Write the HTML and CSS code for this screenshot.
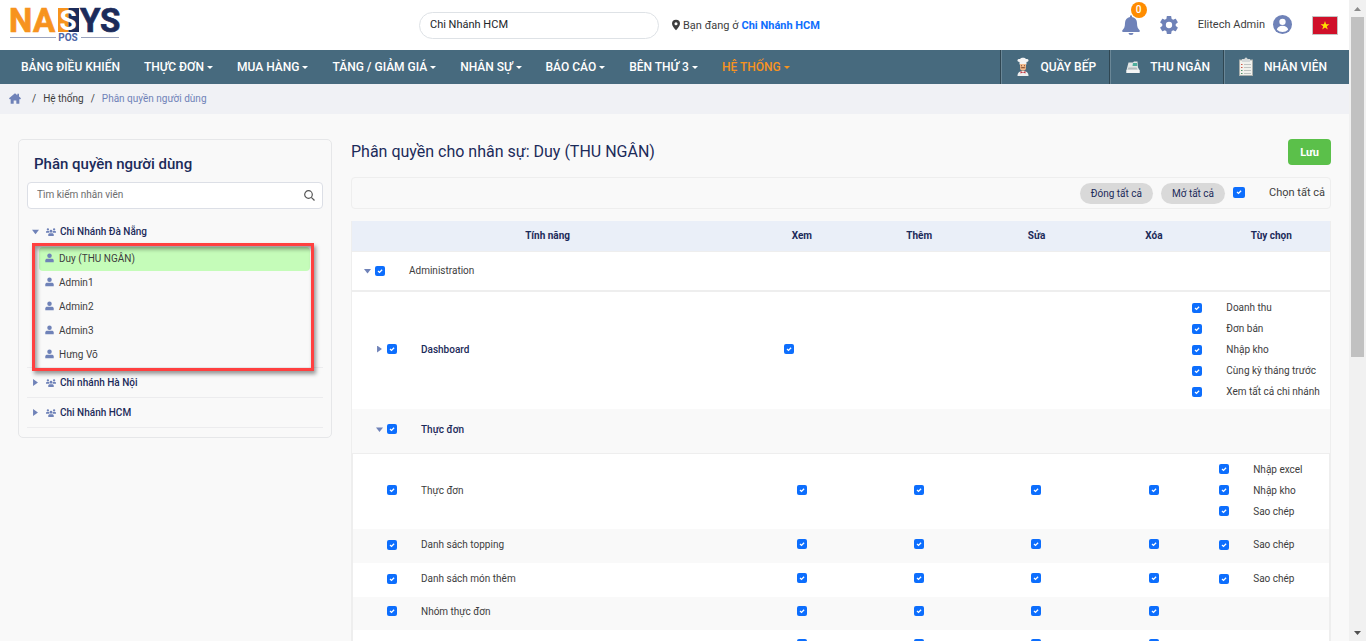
FILE: index.html
```html
<!DOCTYPE html>
<html lang="vi">
<head>
<meta charset="utf-8">
<meta name="viewport" content="width=device-width, initial-scale=1">
<title>Phân quyền người dùng</title>
<link rel="stylesheet" href="styles.css">
</head>
<body>
<svg class="sprite" aria-hidden="true">
  <symbol id="i-user" viewBox="0 0 16 16"><circle cx="8" cy="4" r="4"/><path d="M0.5 15.5v-3C.5 10.3 2 9.300 4 9.300h8c2 0 3.500 1 3.500 3.200v3z"/></symbol>
  <symbol id="i-users" viewBox="0 0 20 16"><circle cx="10" cy="6.500" r="2.800"/><circle cx="3.800" cy="2.800" r="2.300"/><circle cx="16.200" cy="2.800" r="2.300"/><path d="M4.500 16v-2.500c0-2 1.500-3 3.500-3h4c2 0 3.500 1 3.500 3V16zM0 9.500V8c0-1.300 1-2 2-2h3.500c.3 0 .6 0 .8.200C6 7.500 6.300 8.700 7 9.500zM20 9.500V8c0-1.300-1-2-2-2h-3.500c-.3 0-.6 0-.8.200.3 1.300 0 2.500-.7 3.300z"/></symbol>
</svg>

<div class="page">
  <header class="topbar">
    <a class="brand" href="#" aria-label="NASYS POS">
      <svg width="116" height="50" viewBox="-2 0 116 50">
        <path fill="#f7931e" d="M48 8h10.500v24H48z"/><path fill="#1c2b5a" d="M58.500 8H69v24H58.500z"/>
        <g font-family="Roboto, sans-serif" font-weight="700" font-size="33" stroke-width=".7">
          <text x="-1" y="32" fill="#f7931e" stroke="#f7931e">N</text>
          <text x="23" y="32" fill="#f7931e" stroke="#f7931e">A</text>
          <text x="58" y="30" text-anchor="middle" font-size="28" fill="#ffffff">S</text>
          <text x="70" y="32" fill="#1c2b5a" stroke="#1c2b5a">Y</text>
          <text x="90" y="32" fill="#1c2b5a" stroke="#1c2b5a">S</text>
        </g>
        <path stroke="#9aa3bd" d="M0 37.500h46M71 37.500h38"/>
        <text x="58" y="41" text-anchor="middle" font-family="Roboto, sans-serif" font-weight="700" font-size="10" fill="#4c66a8">POS</text>
      </svg>
    </a>
    <input class="branch" type="text" value="Chi Nhánh HCM" aria-label="Chi nhánh">
    <p class="location">
      <svg width="8" height="12" viewBox="0 0 12 16"><path fill="#3d3d3d" fill-rule="evenodd" d="M6 0a6 6 0 0 1 6 6c0 3.500-4 7.500-6 10C4 13.500 0 9.500 0 6a6 6 0 0 1 6-6zm0 3.700a2.300 2.300 0 1 0 0 4.600 2.300 2.300 0 0 0 0-4.600z"/></svg>
      Bạn đang ở <a href="#">Chi Nhánh HCM</a>
    </p>
    <div class="tools">
      <button class="icon-btn bell" type="button" aria-label="Thông báo">
        <svg width="18" height="20" viewBox="0 0 18 20"><path fill="#6f82b8" d="M8 1.200a1 1 0 0 1 2 0v.7c3 .5 5 2.800 5 6 0 4 .9 5.400 2.400 7 .9 1 .3 2.100-.9 2.100h-15c-1.200 0-1.800-1.100-.9-2.100C2.100 13.300 3 11.900 3 7.900c0-3.200 2-5.500 5-6zM6.500 18h5a2.500 2 0 0 1-5 0z"/></svg>
        <span class="badge">0</span>
      </button>
      <button class="icon-btn" type="button" aria-label="Cài đặt">
        <svg width="18" height="20" viewBox="2 1.500 20 21"><path fill="#6f82b8" d="M19.430 12.980c.04-.32.070-.64.070-.98s-.03-.66-.07-.98l2.110-1.650c.19-.15.240-.42.120-.64l-2-3.460c-.12-.22-.39-.3-.61-.22l-2.490 1c-.52-.4-1.080-.73-1.690-.98l-.38-2.650C14.460 2.180 14.250 2 14 2h-4c-.25 0-.46.180-.49.420l-.38 2.650c-.61.250-1.170.590-1.690.98l-2.490-1c-.23-.09-.49 0-.61.220l-2 3.460c-.13.220-.07.490.12.640l2.110 1.650c-.04.320-.07.650-.07.980s.03.660.070.980l-2.110 1.650c-.19.150-.24.420-.12.640l2 3.460c.12.220.39.300.61.220l2.490-1c.52.400 1.080.730 1.690.980l.38 2.650c.03.240.24.420.49.420h4c.25 0 .46-.18.490-.42l.38-2.650c.61-.25 1.170-.59 1.690-.98l2.490 1c.23.090.49 0 .61-.22l2-3.460c.12-.22.070-.49-.12-.64zM12 15.500a3.500 3.500 0 1 1 0-7 3.500 3.500 0 0 1 0 7z"/></svg>
      </button>
      <a class="account" href="#">Elitech Admin
        <svg width="19" height="19" viewBox="0 0 18 18"><circle cx="9" cy="9" r="9" fill="#6f82b8"/><circle cx="9" cy="6.500" r="3" fill="#fff"/><path fill="#fff" d="M3.700 14a5.300 3.800 0 0 1 10.600 0A7.500 7.500 0 0 1 3.700 14z"/></svg>
      </a>
      <button class="icon-btn" type="button" aria-label="Tiếng Việt">
        <svg width="26" height="19" viewBox="0 0 26 19"><path fill="#d0102a" stroke="#c4c4c4" d="M.5.500h25v18H.5z"/><path fill="#ffdf00" d="M13 5l1.100 3.200h3.400l-2.700 2 1 3.300-2.800-2-2.800 2 1-3.300-2.700-2h3.400z"/></svg>
      </button>
    </div>
  </header>

  <nav class="mainnav" aria-label="Chính">
    <ul class="menu">
      <li><a href="#">BẢNG ĐIỀU KHIỂN</a></li>
      <li><a class="drop" href="#">THỰC ĐƠN</a></li>
      <li><a class="drop" href="#">MUA HÀNG</a></li>
      <li><a class="drop" href="#">TĂNG / GIẢM GIÁ</a></li>
      <li><a class="drop" href="#">NHÂN SỰ</a></li>
      <li><a class="drop" href="#">BÁO CÁO</a></li>
      <li><a class="drop" href="#">BÊN THỨ 3</a></li>
      <li><a class="drop active" href="#">HỆ THỐNG</a></li>
    </ul>
    <ul class="shortcuts">
      <li><a href="#">
        <svg width="20" height="20" viewBox="0 0 20 20"><path fill="#f4f4f4" d="M6.500 5C3.500 4.500 4 1.500 7 2 8 .2 12 .2 13 2c3-.5 3.500 2.500.5 3v2.500h-7z"/><path fill="#f0b98c" d="M7 7h6v4c0 3.500-6 3.500-6 0z"/><path fill="#8a5230" d="M7.500 10.500c1.500-.8 3.500-.8 5 0l-.5.800H8z"/><path fill="#7a4a30" d="M8 8.300h1v1H8zM11 8.300h1v1h-1z"/><path fill="#eee" d="M4.500 19c0-3.500 2-5 5.500-5s5.500 1.500 5.500 5z"/><path fill="#c23b45" d="M7.500 14l2.500 1.200 2.500-1.200v2.500L10 15.500l-2.500 1z"/></svg>
        QUẦY BẾP</a></li>
      <li><a href="#">
        <svg width="20" height="20" viewBox="0 0 20 20"><path fill="#e3e7e6" d="M6.500 5.500H11l1-1h3.500l.5 6 1.500 2.500v3h-13v-3z"/><path fill="#4fae9c" d="M11 6h4l.4 3H10.500z"/><path fill="#b4bbbd" d="M6.500 10.500h8l1 2H5.500z"/><path fill="#f4f5f5" d="M4.500 13h13v3h-13z"/></svg>
        THU NGÂN</a></li>
      <li><a href="#">
        <svg width="20" height="20" viewBox="0 0 20 20"><path fill="#a9aeac" d="M3 2.500h14V19H3z"/><path fill="#f1f1ec" d="M4 3.500h12V18H4z"/><path fill="#d4d8d8" d="M6 2h2.500a1.500 1.500 0 0 1 3 0H14v3H6z"/><path stroke="#bfc3c1" d="M8 7.500h7M8 10.500h7M8 13.500h7M8 16.500h7"/><path stroke="#d05545" d="M5 7.500h1.500M5 10.500h1.500"/><path stroke="#509268" d="M5 13.500h1.500M5 16.500h1.500"/></svg>
        NHÂN VIÊN</a></li>
    </ul>
  </nav>

  <nav class="crumbs" aria-label="Breadcrumb">
    <a href="#" aria-label="Trang chủ"><svg width="12" height="11" viewBox="0 0 18 16"><path fill="#6f82b8" d="M9 0l3.500 3V1h2.500v4l3 2.800L17 9h-1.500v7H11v-5H7v5H2.500V9H1L0 7.800z"/></svg></a>
    <span>/</span><a href="#">Hệ thống</a><span>/</span><span class="here">Phân quyền người dùng</span>
  </nav>

  <main class="content">
    <aside class="staff">
      <h2>Phân quyền người dùng</h2>
      <div class="search">
        <input type="text" placeholder="Tìm kiếm nhân viên" aria-label="Tìm kiếm nhân viên">
        <svg width="11" height="11" viewBox="0 0 11 11" fill="none" stroke="#555" stroke-width="1.200"><circle cx="4.500" cy="4.500" r="3.800"/><path d="M7.300 7.300L10.500 10.500"/></svg>
      </div>
      <ul class="tree">
        <li class="group open">
          <button type="button" aria-expanded="true"><i class="arrow down"></i><svg class="users"><use href="#i-users"/></svg>Chi Nhánh Đà Nẵng</button>
          <ul class="people">
            <li><a class="selected" href="#"><svg class="user"><use href="#i-user"/></svg>Duy (THU NGÂN)</a></li>
            <li><a href="#"><svg class="user"><use href="#i-user"/></svg>Admin1</a></li>
            <li><a href="#"><svg class="user"><use href="#i-user"/></svg>Admin2</a></li>
            <li><a href="#"><svg class="user"><use href="#i-user"/></svg>Admin3</a></li>
            <li><a href="#"><svg class="user"><use href="#i-user"/></svg>Hưng Võ</a></li>
          </ul>
        </li>
        <li class="group"><button type="button" aria-expanded="false"><i class="arrow"></i><svg class="users"><use href="#i-users"/></svg>Chi nhánh Hà Nội</button></li>
        <li class="group"><button type="button" aria-expanded="false"><i class="arrow"></i><svg class="users"><use href="#i-users"/></svg>Chi Nhánh HCM</button></li>
      </ul>
    </aside>

    <section class="rights">
      <div class="heading">
        <h1>Phân quyền cho nhân sự: Duy (THU NGÂN)</h1>
        <button class="save" type="button">Lưu</button>
      </div>
      <div class="actions">
        <button class="pill" type="button">Đóng tất cả</button>
        <button class="pill" type="button">Mở tất cả</button>
        <label class="all"><input type="checkbox" checked>Chọn tất cả</label>
      </div>

      <div class="matrix">
        <table class="grid">
          <thead><tr><th class="name">Tính năng</th><th>Xem</th><th>Thêm</th><th>Sửa</th><th>Xóa</th><th>Tùy chọn</th></tr></thead>
          <tbody><tr class="module"><td colspan="6"><label><i class="arrow down"></i><input type="checkbox" checked>Administration</label></td></tr></tbody>
        </table>

        <table class="grid sub">
          <colgroup><col class="c-name"><col class="c-act"><col class="c-act"><col class="c-act"><col class="c-act"><col></colgroup>
          <tbody>
            <tr>
              <td><label class="strong"><i class="arrow"></i><input type="checkbox" checked>Dashboard</label></td>
              <td class="act"><input type="checkbox" checked aria-label="Xem"></td><td></td><td></td><td></td>
              <td class="opts">
                <label><input type="checkbox" checked>Doanh thu</label>
                <label><input type="checkbox" checked>Đơn bán</label>
                <label><input type="checkbox" checked>Nhập kho</label>
                <label><input type="checkbox" checked>Cùng kỳ tháng trước</label>
                <label><input type="checkbox" checked>Xem tất cả chi nhánh</label>
              </td>
            </tr>
            <tr class="section"><td colspan="6"><label class="strong"><i class="arrow down"></i><input type="checkbox" checked>Thực đơn</label></td></tr>
          </tbody>
        </table>

        <table class="grid leaf">
          <colgroup><col class="c-wide"><col class="c-even"><col class="c-even"><col class="c-even"><col class="c-even"><col></colgroup>
          <tbody>
            <tr>
              <td><label><input type="checkbox" checked>Thực đơn</label></td>
              <td class="act"><input type="checkbox" checked aria-label="Xem"></td>
              <td class="act"><input type="checkbox" checked aria-label="Thêm"></td>
              <td class="act"><input type="checkbox" checked aria-label="Sửa"></td>
              <td class="act"><input type="checkbox" checked aria-label="Xóa"></td>
              <td class="opts">
                <label><input type="checkbox" checked>Nhập excel</label>
                <label><input type="checkbox" checked>Nhập kho</label>
                <label><input type="checkbox" checked>Sao chép</label>
              </td>
            </tr>
            <tr>
              <td><label><input type="checkbox" checked>Danh sách topping</label></td>
              <td class="act"><input type="checkbox" checked aria-label="Xem"></td>
              <td class="act"><input type="checkbox" checked aria-label="Thêm"></td>
              <td class="act"><input type="checkbox" checked aria-label="Sửa"></td>
              <td class="act"><input type="checkbox" checked aria-label="Xóa"></td>
              <td class="opts"><label><input type="checkbox" checked>Sao chép</label></td>
            </tr>
            <tr>
              <td><label><input type="checkbox" checked>Danh sách món thêm</label></td>
              <td class="act"><input type="checkbox" checked aria-label="Xem"></td>
              <td class="act"><input type="checkbox" checked aria-label="Thêm"></td>
              <td class="act"><input type="checkbox" checked aria-label="Sửa"></td>
              <td class="act"><input type="checkbox" checked aria-label="Xóa"></td>
              <td class="opts"><label><input type="checkbox" checked>Sao chép</label></td>
            </tr>
            <tr class="short">
              <td><label><input type="checkbox" checked>Nhóm thực đơn</label></td>
              <td class="act"><input type="checkbox" checked aria-label="Xem"></td>
              <td class="act"><input type="checkbox" checked aria-label="Thêm"></td>
              <td class="act"><input type="checkbox" checked aria-label="Sửa"></td>
              <td class="act"><input type="checkbox" checked aria-label="Xóa"></td>
              <td></td>
            </tr>
            <tr class="short">
              <td></td>
              <td class="act"><input type="checkbox" checked aria-label="Xem"></td>
              <td class="act"><input type="checkbox" checked aria-label="Thêm"></td>
              <td class="act"><input type="checkbox" checked aria-label="Sửa"></td>
              <td class="act"><input type="checkbox" checked aria-label="Xóa"></td>
              <td></td>
            </tr>
          </tbody>
        </table>
      </div>
    </section>
  </main>
</div>

<div class="scrollbar" aria-hidden="true"><i class="up"></i><i class="thumb"></i><i class="dn"></i></div>
</body>
</html>
```
FILE: styles.css
```css
* { box-sizing: border-box; }

body {
  margin: 0;
  display: flex;
  height: 100vh;
  overflow: hidden;
  background: #f9f9f9;
  color: #3d3d3d;
  font-family: Roboto, "Noto Sans", sans-serif;
  font-size: 10px;
  line-height: 15px;
}
ul { list-style: none; margin: 0; padding: 0; }
h1, h2, p { margin: 0; font-weight: 400; }
a { color: inherit; text-decoration: none; }
button, input { font: inherit; color: inherit; }
button { border: 0; background: none; padding: 0; }
svg { display: block; flex: none; }
.sprite { position: absolute; width: 0; height: 0; }
.page { flex: 1; min-width: 0; overflow: hidden; }

/* Top bar */
.topbar {
  display: flex;
  align-items: center;
  height: 50px;
  padding: 0 11px 0 8px;
  background: #fff;
}
.brand { flex: 0 0 411px; }
.branch {
  width: 240px;
  height: 27px;
  padding: 0 10px 1px;
  border: 1px solid #dee2e6;
  border-radius: 14px;
  background: #fff;
  color: #212529;
  font-size: 11px;
}
.location { display: flex; align-items: center; gap: 3px; margin-left: 13px; font-size: 11px; }
.location a { color: #0d6efd; font-weight: 700; }
.tools { display: flex; align-items: center; gap: 20px; margin-left: auto; }
.icon-btn { position: relative; }
.badge {
  position: absolute;
  top: -13px;
  left: 9px;
  width: 16px;
  height: 16px;
  border-radius: 8px;
  background: #ff8c00;
  color: #fff;
  font-weight: 500;
  line-height: 16px;
}
.account { display: flex; align-items: center; gap: 8px; padding-bottom: 2px; font-size: 11px; }

/* Main navigation */
.mainnav {
  display: flex;
  justify-content: space-between;
  height: 34px;
  background: #476a7e;
  color: #fff;
  font-size: 12px;
  font-weight: 500;
  line-height: 34px;
}
.menu, .shortcuts { display: flex; }
.menu { gap: 24px; padding-left: 21px; }
.menu a { display: flex; align-items: center; gap: 3px; white-space: nowrap; }
.drop::after {
  content: "";
  border: 3px solid transparent;
  border-top-color: currentColor;
  border-bottom: 0;
}
.active { color: #f7931e; }
.shortcuts li { border-left: 1px solid #2f4652; }
.shortcuts a {
  display: flex;
  align-items: center;
  gap: 8px;
  padding: 0 13px 0 11px;
  border-left: 1px solid #6a8797;
  white-space: nowrap;
}
.shortcuts li:last-child a { padding-right: 22px; }

.crumbs {
  display: flex;
  align-items: center;
  gap: 7px;
  height: 30px;
  padding: 0 0 2px 9px;
  background: #f0f1f5;
}
.crumbs > a:first-child { margin-right: 4px; }
.here { color: #6f82b8; }

.content { display: flex; align-items: flex-start; gap: 19px; padding: 25px 18px 0; }

/* Staff tree */
.staff {
  flex: 0 0 314px;
  padding: 8px 8px 9px;
  border: 1px solid #e6e7e9;
  border-radius: 5px;
}
.staff h2 { padding: 6px 7px 8px; color: #1c2b5a; font-size: 15px; font-weight: 500; line-height: 20px; }
.search { position: relative; }
.search input {
  display: block;
  width: 100%;
  height: 27px;
  padding: 0 30px 2px 9px;
  border: 1px solid #dcdfe6;
  border-radius: 4px;
  background: #fff;
}
.search input::placeholder { color: #6c6c6c; opacity: 1; }
.search svg { position: absolute; top: 8px; right: 8px; }
.tree { padding-top: 8px; }
.group { border-bottom: 1px solid #ececee; }
.group button {
  display: flex;
  align-items: center;
  width: 100%;
  height: 29px;
  padding-left: 5px;
  color: #1c2b5a;
  font-weight: 500;
}
.arrow {
  display: inline-block;
  flex: none;
  width: 7px;
  height: 7px;
  background: #6f82b8;
  clip-path: polygon(15% 0, 85% 50%, 15% 100%);
}
.arrow.down { clip-path: polygon(0 25%, 100% 25%, 50% 90%); }
.users { width: 10px; height: 8px; margin: 0 4px 0 7px; fill: #6f82b8; }
.people { position: relative; padding: 1px 13px 0 12px; }
.people::after {
  content: "";
  position: absolute;
  inset: -3px 9px -4px 5px;
  border: 3px solid #ff4040;
  box-shadow: 2px 3px 4px rgba(0, 0, 0, .4), inset 2px 3px 4px rgba(0, 0, 0, .4);
  pointer-events: none;
}
.people a { display: flex; align-items: center; gap: 5px; height: 24px; padding: 0 0 2px 6px; border-radius: 4px; }
.people .selected { background: #c5fcb9; }
.user { width: 9px; height: 10px; fill: #6f82b8; }

/* Permissions */
.rights { flex: 1; min-width: 0; }
.heading { display: flex; align-items: center; justify-content: space-between; height: 26px; }
.heading h1 { color: #1c2b5a; font-size: 16px; line-height: 26px; }
.save { width: 43px; height: 26px; border-radius: 4px; background: #5bc04a; color: #fff; font-size: 11px; font-weight: 700; }
.actions {
  display: flex;
  align-items: center;
  justify-content: flex-end;
  gap: 8px;
  height: 32px;
  margin: 12px 0;
  padding-right: 5px;
  border: 1px solid #eee;
  border-radius: 4px;
}
.pill { height: 21px; padding: 0 11px; border-radius: 11px; background: #d9d9d9; color: #1c2b5a; }
.all { display: flex; align-items: center; gap: 24px; padding-bottom: 2px; font-size: 11px; }

input[type="checkbox"] {
  appearance: none;
  flex: none;
  display: block;
  width: 10px;
  height: 10px;
  margin: 0;
  border-radius: 2px;
  background: #0d6efd url("data:image/svg+xml,%3Csvg xmlns='http://www.w3.org/2000/svg' viewBox='0 0 10 10'%3E%3Cpath fill='none' stroke='white' stroke-width='1.300' d='M3 5l1.500 1.400 2.600-2.700'/%3E%3C/svg%3E") center / 10px no-repeat;
}
.all input[type="checkbox"] { width: 12px; height: 11px; }

.matrix { border: solid #eee; border-width: 0 1px; background: #fff; }
.grid { width: 100%; table-layout: fixed; border-collapse: collapse; }
.grid th, .grid td { padding: 0; }
.grid th { height: 30px; border-bottom: 1px solid #eee; background: #eaeff8; color: #1c2b5a; font-weight: 700; }
.grid th.name { width: 40%; }
.grid label { display: flex; align-items: center; }
.grid label input { margin-right: 24px; }
.grid .arrow { margin-right: 4px; }
.module td { height: 40px; padding-left: 12px; border-bottom: 2px solid #eee; }
.module label { height: 36px; }
.strong { padding-left: 24px; color: #1c2b5a; font-weight: 500; }
.c-name { width: 39%; }
.c-act { width: 11.4%; }
.c-wide { width: 40%; }
.c-even { width: 12%; }
.grid .act { padding-bottom: 3px; }
.sub label.strong { padding-bottom: 3px; }
.act input { margin: 0 auto; }
.grid .opts { padding: 5px 0 7px 13px; }
.opts label { height: 21px; white-space: nowrap; }
.section td { height: 44px; border-bottom: 1px solid #eee; background: #f9f9f9; }
.leaf { border: solid #eee; border-width: 0 1px; }
.grid.leaf .opts { padding-left: 7px; }
.leaf td { height: 34px; }
.leaf td:first-child { padding: 0 0 2px 34px; }
.leaf tr:nth-child(even) { background: #f9f9f9; }
.leaf .short td { height: 33px; padding-bottom: 4px; }

/* Scrollbar */
.scrollbar { display: flex; flex-direction: column; align-items: center; flex: 0 0 17px; background: #f1f1f1; }
.up, .dn { width: 7px; height: 4px; margin: 7px 0 6px; background: #8b8b8b; clip-path: polygon(50% 0, 100% 100%, 0 100%); }
.thumb { width: 13px; height: 340px; background: #c1c1c1; }
.dn { margin-top: auto; background: #505050; clip-path: polygon(0 0, 100% 0, 50% 100%); }
```
